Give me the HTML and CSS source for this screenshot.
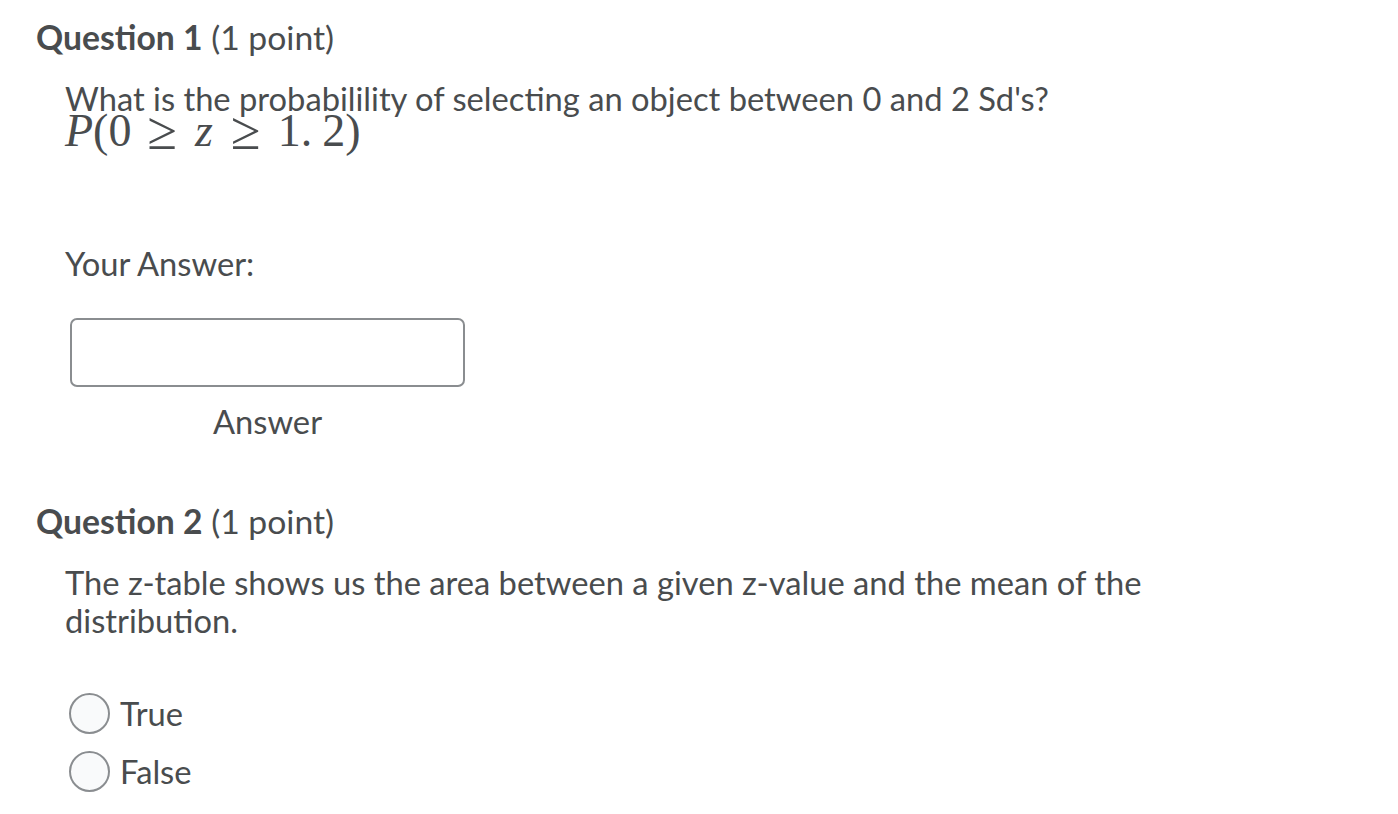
FILE: index.html
```html
<!DOCTYPE html>
<html>
<head>
<meta charset="utf-8">
<link rel="stylesheet" href="styles.css">
</head>
<body>
<div class="page">
  <section class="question">
    <h2 class="q-title"><strong>Question 1</strong> (1 point)</h2>
    <div class="q-body">
      <p class="prompt">What is the probabilility of selecting an object between 0 and 2 Sd's?</p>
      <div class="math"><span class="mi">P</span><span class="mn">(0</span><span class="mo mo1">≥</span><span class="mi">z</span><span class="mo mo2">≥</span><span class="mn">1.</span><span class="mn gap">2)</span></div>
      <p class="your-answer">Your Answer:</p>
      <div class="answer-wrap">
        <div class="answer-input"></div>
        <div class="answer-label">Answer</div>
      </div>
    </div>
  </section>
  <section class="question q2">
    <h2 class="q-title"><strong>Question 2</strong> (1 point)</h2>
    <div class="q-body">
      <p class="prompt2">The z-table shows us the area between a given z-value and the mean of the distribution.</p>
      <div class="options">
        <label class="option"><span class="radio"></span>True</label>
        <label class="option"><span class="radio"></span>False</label>
      </div>
    </div>
  </section>
</div>
</body>
</html>
```
FILE: styles.css
```css
html, body {
  margin: 0;
  padding: 0;
  background: #ffffff;
}
body {
  font-family: Lato, "Open Sans", sans-serif;
  color: #494c4e;
}
.page {
  padding: 17px 0 0 36px;
}
.q-title {
  margin: 0;
  font-size: 33.7px;
  font-weight: 400;
  line-height: 40px;
}
.q-title strong {
  font-weight: 700;
}
.q-body {
  padding-left: 29px;
}
.prompt {
  margin: 27px 0 0 0;
  font-size: 32.7px;
  line-height: 30px;
}
.math {
  font-family: "Liberation Serif", "DejaVu Serif", serif;
  font-size: 46px;
  line-height: 34px;
  margin-top: 0;
  white-space: nowrap;
}
.mi {
  font-style: italic;
}
.mo {
  font-size: 54px;
  line-height: 0;
  vertical-align: -3px;
}
.mo1 {
  margin: 0 18px 0 16px;
}
.mo2 {
  margin: 0 17px 0 18px;
}
.gap {
  margin-left: 10px;
}
.your-answer {
  margin: 97px 0 0 0;
  font-size: 32.7px;
  line-height: 38px;
}
.answer-wrap {
  width: 395px;
  margin-top: 35px;
  margin-left: 5px;
}
.answer-input {
  height: 65px;
  border: 2px solid #8a8d90;
  border-radius: 7px;
}
.answer-label {
  text-align: center;
  font-size: 32.7px;
  line-height: 38px;
  margin-top: 16px;
}
.q2 {
  margin-top: 60px;
}
.prompt2 {
  margin: 23px 0 0 0;
  font-size: 32.7px;
  line-height: 38px;
  max-width: 1160px;
}
.options {
  margin-top: 53px;
  margin-left: 4px;
  display: flex;
  flex-direction: column;
  gap: 17px;
}
.option {
  display: flex;
  align-items: center;
  gap: 10px;
  font-size: 32.7px;
  line-height: 41px;
  height: 41px;
}
.radio {
  width: 37px;
  height: 37px;
  border: 2px solid #8a8d90;
  border-radius: 50%;
  background: #f9fafb;
  flex: none;
}
```
